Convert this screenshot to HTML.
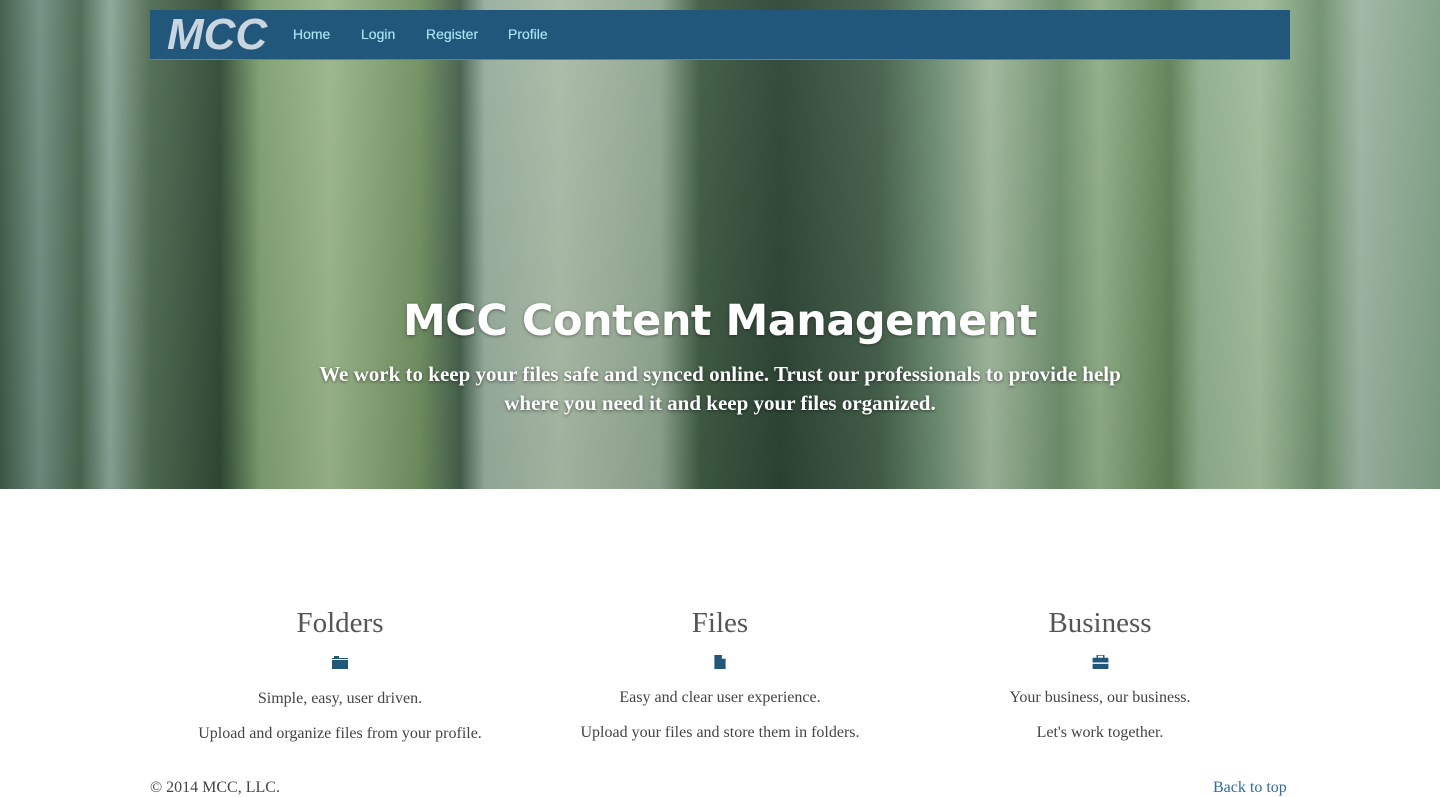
<!DOCTYPE html>
<html><head><style>
body{margin:0;width:1440px;height:794px;overflow:hidden;background:#fff;font-family:"Liberation Serif",serif;color:#444}
.hero{position:absolute;left:0;top:0;width:1440px;height:489px;overflow:hidden;
background:linear-gradient(90deg,#3d5a45 0,#6f8f80 40px,#4a6650 80px,#8aa597 110px,#4f6b52 150px,#2f4a35 220px,#7e9f6f 260px,#9ab58a 330px,#6f8f60 420px,#445f4c 460px,#97ad9c 485px,#a9bba6 560px,#8ea58f 660px,#3e5a42 700px,#2c4434 780px,#445f4a 880px,#6f8f74 940px,#9fb79c 990px,#6e8f6c 1060px,#8fae86 1100px,#5f8055 1170px,#8fae8c 1200px,#a1bd9b 1260px,#6f906d 1320px,#9cb5a2 1360px,#7f9f84 1440px)}
.hero:after{content:"";position:absolute;inset:0;background:linear-gradient(180deg,rgba(255,255,255,.05),rgba(0,0,0,.05))}
nav{position:absolute;left:150px;top:10px;width:1140px;height:49px;background:#22577c;border-bottom:1px solid #4a8ab0;z-index:2}
.logo{position:absolute;left:17px;top:0px;font:italic bold 44px "Liberation Sans",sans-serif;color:#c9d6e0;letter-spacing:0px}
nav a{position:absolute;top:16px;font:14px "Liberation Sans",sans-serif;color:#a8e4f0;text-shadow:0 0 0.4px #a8e4f0}
h1{position:absolute;top:296px;left:0;width:1440px;text-align:center;margin:0;font:bold 43px "DejaVu Sans",sans-serif;color:#fff;z-index:2;text-shadow:0 1px 3px rgba(0,0,0,.4);letter-spacing:-0.5px}
.sub{position:absolute;top:360px;left:260px;width:920px;text-align:center;font:bold 21px/29px "Liberation Serif",serif;color:#fff;z-index:2;text-shadow:0 1px 3px rgba(0,0,0,.5)}
.col{position:absolute;top:607px;width:380px;text-align:center}
.col h2{margin:0;font:normal 29px "Liberation Serif",serif;color:#555}
.col p{margin:0;font:16px "Liberation Serif",serif;color:#444}
.ic{display:block;margin:15px auto 0;height:14px}
.foot{position:absolute;top:779px;font:16px "Liberation Serif",serif}
</style></head><body>
<div class="hero"></div>
<nav><span class="logo">MCC</span><a style="left:143px">Home</a><a style="left:211px">Login</a><a style="left:276px">Register</a><a style="left:358px">Profile</a></nav>
<h1>MCC Content Management</h1>
<div class="sub">We work to keep your files safe and synced online. Trust our professionals to provide help<br>where you need it and keep your files organized.</div>
<div class="col" style="left:150px"><h2>Folders</h2><svg class="ic" width="16" height="14" viewBox="0 0 16 14"><rect x="0" y="3" width="16" height="11" fill="#22577c"/><rect x="2" y="1" width="5" height="2" fill="#22577c"/><rect x="0" y="4" width="16" height="1" fill="#fff"/></svg><p style="margin-top:21px">Simple, easy, user driven.</p><p style="margin-top:17px">Upload and organize files from your profile.</p></div>
<div class="col" style="left:530px"><h2>Files</h2><svg class="ic" width="12" height="15" viewBox="0 0 12 15"><path d="M0 0H8L12 4V15H0Z" fill="#22577c"/><path d="M8 0V4H12" fill="#fff"/></svg><p style="margin-top:20px">Easy and clear user experience.</p><p style="margin-top:17px">Upload your files and store them in folders.</p></div>
<div class="col" style="left:910px"><h2>Business</h2><svg class="ic" width="17" height="15" viewBox="0 0 17 15"><rect x="0" y="3" width="17" height="12" rx="1" fill="#22577c"/><rect x="5" y="0" width="7" height="4" fill="none" stroke="#22577c" stroke-width="1.5"/><rect x="0" y="8" width="17" height="1.5" fill="#fff"/></svg><p style="margin-top:20px">Your business, our business.</p><p style="margin-top:17px">Let's work together.</p></div>
<div class="foot" style="left:150px;color:#444">© 2014 MCC, LLC.</div>
<div class="foot" style="left:1213px;color:#2a6ab0">Back to top</div>
</body></html>
